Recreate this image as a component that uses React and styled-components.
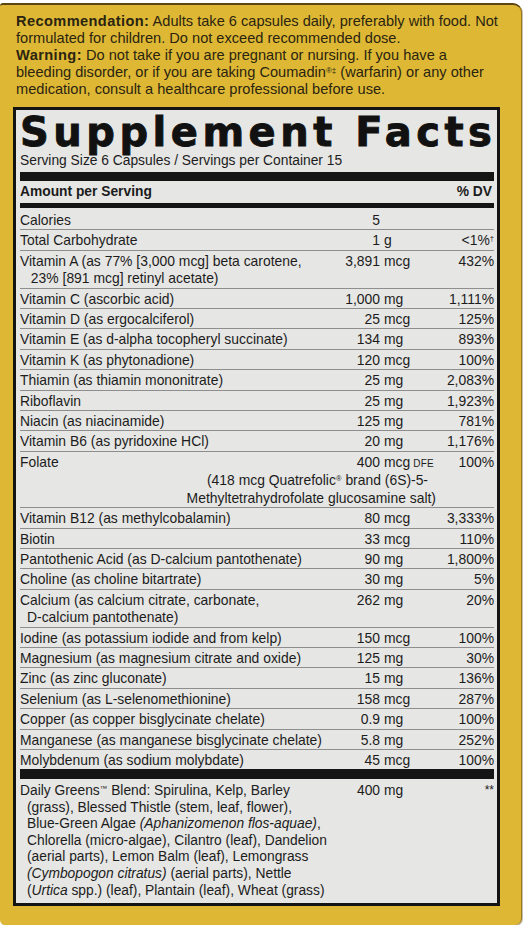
import React from "react";
import styled, { createGlobalStyle } from "styled-components";

const GlobalStyle = createGlobalStyle`
  html, body { margin: 0; padding: 0; background: #ffffff; }
  body {
    font-family: "Liberation Sans", Arial, sans-serif;
  }
`;

const Label = styled.div`
  box-sizing: border-box;
  width: 522px;
  margin-top: 3px;
  padding: 8px 0 19px 0;
  background: #deb834;
  border-top: 2px solid #5b4512;
  border-right: 1px solid #9a781c;
  border-radius: 3px 9px 7px 5px;
  box-shadow: 1px 1px 0 rgba(60, 45, 10, 0.3);
`;

const Notes = styled.div`
  padding-left: 16px;
  font-size: 14.6px;
  line-height: 17px;
  color: #2b2411;
  white-space: nowrap;
`;

const NoteLine = styled.div``;

const Lead = styled.b`
  font-weight: 700;
  letter-spacing: 0.4px;
`;

const Panel = styled.section`
  box-sizing: border-box;
  width: 487px;
  margin: 9px 0 0 13px;
  border: 3px solid #141414;
  background: #e6e6e4;
  padding: 0 3px 0 4px;
  color: #1c1c1c;
`;

const Title = styled.h1`
  margin: 3px 0 0;
  font-family: "DejaVu Sans", "Liberation Sans", sans-serif;
  font-weight: 700;
  font-size: 40px;
  line-height: 39px;
  letter-spacing: 4.5px;
  -webkit-text-stroke: 0.9px #111;
  color: #111;
  white-space: nowrap;
`;

const Serving = styled.div`
  font-size: 13.8px;
  line-height: 17px;
  white-space: nowrap;
`;

const Rule = styled.div`
  height: ${(p) => p.$h}px;
  margin-top: ${(p) => p.$mt || 0}px;
  background: #151515;
`;

const HeaderRow = styled.div`
  display: flex;
  justify-content: space-between;
  padding: 2px 2px 3px 0;
  font-weight: 700;
  font-size: 13.8px;
  line-height: 17px;
`;

const Row = styled.div`
  display: grid;
  grid-template-columns: minmax(0, 1fr) 60px 56px 54px;
  padding-top: ${(p) => (p.$first ? 4 : 2)}px;
  border-bottom: ${(p) => (p.$last ? "none" : "1px solid #8e8e8e")};
  font-size: 13.9px;
  line-height: 17.4px;
`;

const Name = styled.div`
  white-space: nowrap;
  min-width: 0;
`;

const NameLine = styled.div`
  padding-left: ${(p) => (p.$cont ? 7 : 0)}px;
`;

const Num = styled.div`
  text-align: right;
  padding-right: 4px;
  white-space: nowrap;
`;

const Unit = styled.div`
  white-space: nowrap;
`;

const Dv = styled.div`
  text-align: right;
  white-space: nowrap;
`;

const SmallCaps = styled.span`
  font-size: 10px;
  letter-spacing: 0.2px;
  margin-left: 3px;
`;

const Sup = styled.sup`
  font-size: 0.55em;
  vertical-align: 0.55em;
  line-height: 0;
`;

const FolateNote = styled.div`
  grid-column: 1 / 4;
  text-align: right;
  padding-right: 4px;
  white-space: nowrap;
`;

const FolateLine = styled.div`
  margin-right: ${(p) => p.$mr || 0}px;
`;

const Blend = styled.div`
  display: grid;
  grid-template-columns: minmax(0, 1fr) 60px 56px 54px;
  padding: 3.7px 0 4px;
  font-size: 13.8px;
  line-height: 16.6px;
`;

const Stars = styled.div`
  text-align: right;
  font-size: 12px;
  line-height: 15px;
`;

const I = styled.i`
  font-style: italic;
`;

const rows = [
  { name: ["Calories"], num: "5", unit: "", dv: "" },
  { name: ["Total Carbohydrate"], num: "1", unit: "g", dv: <>&lt;1%<Sup>†</Sup></> },
  {
    name: ["Vitamin A (as 77% [3,000 mcg] beta carotene,", "\u00a023% [891 mcg] retinyl acetate)"],
    num: "3,891",
    unit: "mcg",
    dv: "432%",
  },
  { name: ["Vitamin C (ascorbic acid)"], num: "1,000", unit: "mg", dv: "1,111%" },
  { name: ["Vitamin D (as ergocalciferol)"], num: "25", unit: "mcg", dv: "125%" },
  { name: ["Vitamin E (as d-alpha tocopheryl succinate)"], num: "134", unit: "mg", dv: "893%" },
  { name: ["Vitamin K (as phytonadione)"], num: "120", unit: "mcg", dv: "100%" },
  { name: ["Thiamin (as thiamin mononitrate)"], num: "25", unit: "mg", dv: "2,083%" },
  { name: ["Riboflavin"], num: "25", unit: "mg", dv: "1,923%" },
  { name: ["Niacin (as niacinamide)"], num: "125", unit: "mg", dv: "781%" },
  { name: ["Vitamin B6 (as pyridoxine HCl)"], num: "20", unit: "mg", dv: "1,176%" },
  { name: ["Folate"], num: "400", unit: "mcg", dfe: true, dv: "100%", folate: true },
  { name: ["Vitamin B12 (as methylcobalamin)"], num: "80", unit: "mcg", dv: "3,333%" },
  { name: ["Biotin"], num: "33", unit: "mcg", dv: "110%" },
  { name: ["Pantothenic Acid (as D-calcium pantothenate)"], num: "90", unit: "mg", dv: "1,800%" },
  { name: ["Choline (as choline bitartrate)"], num: "30", unit: "mg", dv: "5%" },
  {
    name: ["Calcium (as calcium citrate, carbonate,", "D-calcium pantothenate)"],
    num: "262",
    unit: "mg",
    dv: "20%",
  },
  { name: ["Iodine (as potassium iodide and from kelp)"], num: "150", unit: "mcg", dv: "100%" },
  { name: ["Magnesium (as magnesium citrate and oxide)"], num: "125", unit: "mg", dv: "30%" },
  { name: ["Zinc (as zinc gluconate)"], num: "15", unit: "mg", dv: "136%" },
  { name: ["Selenium (as L-selenomethionine)"], num: "158", unit: "mcg", dv: "287%" },
  { name: ["Copper (as copper bisglycinate chelate)"], num: "0.9", unit: "mg", dv: "100%" },
  { name: ["Manganese (as manganese bisglycinate chelate)"], num: "5.8", unit: "mg", dv: "252%" },
  { name: ["Molybdenum (as sodium molybdate)"], num: "45", unit: "mcg", dv: "100%" },
];

function NutrientRow({ row, first, last }) {
  return (
    <Row $first={first} $last={last}>
      <Name>
        {row.name.map((line, i) => (
          <NameLine key={i} $cont={i > 0}>
            {line}
          </NameLine>
        ))}
      </Name>
      <Num>{row.num}</Num>
      <Unit>
        {row.unit}
        {row.dfe && <SmallCaps>DFE</SmallCaps>}
      </Unit>
      <Dv>{row.dv}</Dv>
      {row.folate && (
        <FolateNote>
          <FolateLine $mr={8}>
            (418 mcg Quatrefolic<Sup>®</Sup> brand (6S)-5-
          </FolateLine>
          <FolateLine>Methyltetrahydrofolate glucosamine salt)</FolateLine>
        </FolateNote>
      )}
    </Row>
  );
}

export default function App() {
  return (
    <>
      <GlobalStyle />
      <Label>
        <Notes>
          <NoteLine>
            <Lead>Recommendation:</Lead> Adults take 6 capsules daily, preferably with food. Not
          </NoteLine>
          <NoteLine>formulated for children. Do not exceed recommended dose.</NoteLine>
          <NoteLine>
            <Lead>Warning:</Lead> Do not take if you are pregnant or nursing. If you have a
          </NoteLine>
          <NoteLine>
            bleeding disorder, or if you are taking Coumadin<Sup>®‡</Sup> (warfarin) or any other
          </NoteLine>
          <NoteLine>medication, consult a healthcare professional before use.</NoteLine>
        </Notes>
        <Panel>
          <Title>Supplement Facts</Title>
          <Serving>Serving Size 6 Capsules / Servings per Container 15</Serving>
          <Rule $h={9} $mt={3} />
          <HeaderRow>
            <span>Amount per Serving</span>
            <span>% DV</span>
          </HeaderRow>
          <Rule $h={5} />
          {rows.map((row, i) => (
            <NutrientRow key={i} row={row} first={i === 0} last={i === rows.length - 1} />
          ))}
          <Rule $h={10} />
          <Blend>
            <Name>
              <NameLine>
                Daily Greens<Sup>™</Sup> Blend: Spirulina, Kelp, Barley
              </NameLine>
              <NameLine $cont>(grass), Blessed Thistle (stem, leaf, flower),</NameLine>
              <NameLine $cont>
                Blue-Green Algae <I>(Aphanizomenon flos-aquae)</I>,
              </NameLine>
              <NameLine $cont>Chlorella (micro-algae), Cilantro (leaf), Dandelion</NameLine>
              <NameLine $cont>(aerial parts), Lemon Balm (leaf), Lemongrass</NameLine>
              <NameLine $cont>
                <I>(Cymbopogon citratus)</I> (aerial parts), Nettle
              </NameLine>
              <NameLine $cont>
                (<I>Urtica</I> spp.) (leaf), Plantain (leaf), Wheat (grass)
              </NameLine>
            </Name>
            <Num>400</Num>
            <Unit>mg</Unit>
            <Stars>**</Stars>
          </Blend>
        </Panel>
      </Label>
    </>
  );
}
